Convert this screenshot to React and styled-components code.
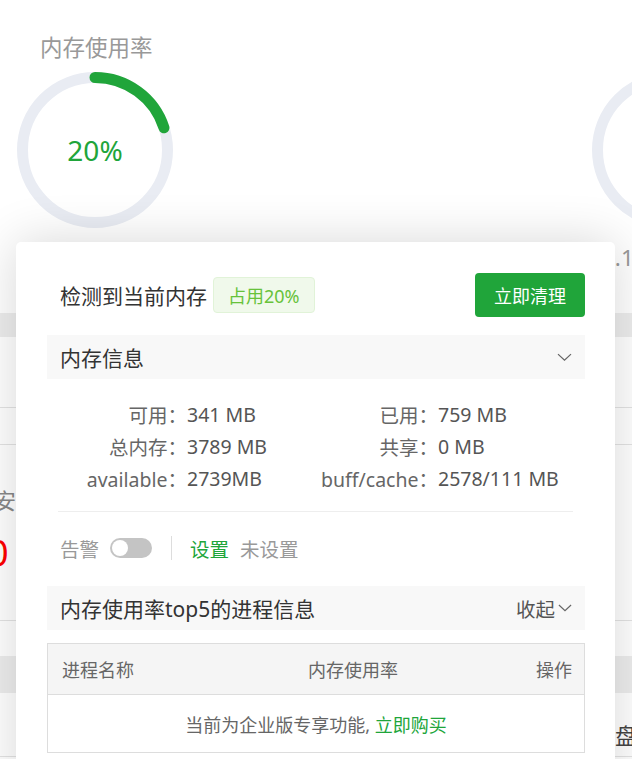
import React from 'react';
import styled, { createGlobalStyle } from 'styled-components';

const GlobalStyle = createGlobalStyle`
  html, body {
    margin: 0;
    padding: 0;
    background: #fff;
  }
  body {
    font-family: "Noto Sans", "Noto Sans CJK SC", sans-serif;
  }
`;

const GREEN = '#20a53a';

function Chevron({ size = 15 }) {
  return (
    <svg width={size} height={size * 0.55} viewBox="0 0 15 8" fill="none">
      <polyline points="1,1 7.5,7 14,1" stroke="#666" strokeWidth="1.3" />
    </svg>
  );
}

function Ring({ percent = 0, color = GREEN }) {
  const r = 72.5;
  const c = 2 * Math.PI * r;
  return (
    <svg width="156" height="156" viewBox="0 0 156 156">
      <circle cx="78" cy="78" r={r} fill="none" stroke="#e9ecf3" strokeWidth="11" />
      {percent > 0 && (
        <circle
          cx="78"
          cy="78"
          r={r}
          fill="none"
          stroke={color}
          strokeWidth="11"
          strokeLinecap="round"
          strokeDasharray={`${(c * percent) / 100} ${c}`}
          transform="rotate(-90 78 78)"
        />
      )}
    </svg>
  );
}

export default function App() {
  return (
    <>
      <GlobalStyle />
      <Page>
        <Gauges>
          <GaugeCol>
            <GaugeTitle>内存使用率</GaugeTitle>
            <GaugeBox>
              <Ring percent={20} />
              <GaugeValue>20%</GaugeValue>
            </GaugeBox>
          </GaugeCol>
          <GaugeCol $far>
            <GaugeTitle />
            <GaugeBox>
              <Ring percent={0} />
            </GaugeBox>
            <GaugeCaption>0.17</GaugeCaption>
          </GaugeCol>
        </Gauges>

        <List>
          <Band />
          <Row $h={71} />
          <Row $h={37} />
          <Row $h={176}>
            <SideText>安</SideText>
            <SideNumber>0</SideNumber>
          </Row>
          <Gap $h={35} />
          <Band $h={37} />
          <Row $h={64}>
            <FarText>磁盘</FarText>
          </Row>
        </List>

        <Card>
          <Header>
            <HeaderLeft>
              <HeaderTitle>检测到当前内存</HeaderTitle>
              <Badge>占用20%</Badge>
            </HeaderLeft>
            <PrimaryButton>立即清理</PrimaryButton>
          </Header>

          <SectionBar $top={18}>
            <SectionTitle>内存信息</SectionTitle>
            <Chevron />
          </SectionBar>

          <InfoGrid>
            <InfoLabel>可用：</InfoLabel>
            <InfoValue>341 MB</InfoValue>
            <InfoLabel>已用：</InfoLabel>
            <InfoValue>759 MB</InfoValue>
            <InfoLabel>总内存：</InfoLabel>
            <InfoValue>3789 MB</InfoValue>
            <InfoLabel>共享：</InfoLabel>
            <InfoValue>0 MB</InfoValue>
            <InfoLabel>available：</InfoLabel>
            <InfoValue>2739MB</InfoValue>
            <InfoLabel>buff/cache：</InfoLabel>
            <InfoValue>2578/111 MB</InfoValue>
          </InfoGrid>
          <Divider />

          <AlertRow>
            <Muted>告警</Muted>
            <Toggle>
              <Knob />
            </Toggle>
            <VSep />
            <LinkText>设置</LinkText>
            <Muted $gap={11}>未设置</Muted>
          </AlertRow>

          <SectionBar $top={26}>
            <SectionTitle>内存使用率top5的进程信息</SectionTitle>
            <Collapse>
              收起
              <Chevron size={14} />
            </Collapse>
          </SectionBar>

          <Table>
            <TableHead>
              <span>进程名称</span>
              <span>内存使用率</span>
              <span>操作</span>
            </TableHead>
            <TableBody>
              当前为企业版专享功能, <LinkText as="a">立即购买</LinkText>
            </TableBody>
          </Table>
        </Card>
      </Page>
    </>
  );
}

const Page = styled.div`
  position: relative;
  width: 632px;
  height: 759px;
  overflow: hidden;
  background: #fff;
`;

const Gauges = styled.div`
  display: flex;
  align-items: flex-start;
  height: 313px;
  padding: 33px 0 0 17px;
  box-sizing: border-box;
`;

const GaugeCol = styled.div`
  display: flex;
  flex-direction: column;
  flex-shrink: 0;
  margin-left: ${(p) => (p.$far ? '419px' : '0')};
`;

const GaugeTitle = styled.div`
  height: 30px;
  margin-left: 23px;
  font-size: 22.5px;
  line-height: 30px;
  color: #999;
  white-space: nowrap;
`;

const GaugeBox = styled.div`
  display: grid;
  place-items: center;
  width: 156px;
  height: 156px;
  margin-top: 9px;

  & > * {
    grid-area: 1 / 1;
  }
`;

const GaugeValue = styled.span`
  font-size: 28px;
  color: ${GREEN};
`;

const GaugeCaption = styled.div`
  margin: 15px 0 0 10px;
  font-size: 22.5px;
  line-height: 30px;
  color: #999;
`;

const List = styled.div`
  display: flex;
  flex-direction: column;
`;

const Band = styled.div`
  height: ${(p) => p.$h || 24}px;
  background: #ededed;
`;

const Row = styled.div`
  height: ${(p) => p.$h}px;
  border-bottom: 1px solid #e3e3e3;
  box-sizing: border-box;
  display: flex;
  flex-direction: column;
`;

const Gap = styled.div`
  height: ${(p) => p.$h}px;
`;

const SideText = styled.span`
  margin: 41px 0 0 -6px;
  font-size: 22px;
  line-height: 28px;
  color: #888;
`;

const SideNumber = styled.span`
  margin: 19px 0 0 -12px;
  font-size: 36px;
  line-height: 40px;
  color: #f00;
`;

const FarText = styled.span`
  margin: 28px 0 0 593px;
  font-size: 22px;
  line-height: 28px;
  color: #444;
  white-space: nowrap;
`;

const Card = styled.div`
  position: absolute;
  left: 16px;
  top: 242px;
  width: 599px;
  height: 560px;
  box-sizing: border-box;
  padding: 31px 30px 0 31px;
  background: #fff;
  border-radius: 5px;
  box-shadow: 0 0 50px rgba(0, 0, 0, 0.16);
`;

const Header = styled.div`
  display: flex;
  align-items: center;
  justify-content: space-between;
  height: 44px;
`;

const HeaderLeft = styled.div`
  display: flex;
  align-items: center;
  padding-left: 13px;
`;

const HeaderTitle = styled.span`
  font-size: 21px;
  color: #333;
`;

const Badge = styled.span`
  display: inline-flex;
  align-items: center;
  height: 36px;
  margin-left: 6px;
  padding: 0 14px;
  box-sizing: border-box;
  border: 1px solid #e1f3d8;
  border-radius: 4px;
  background: #f0f9eb;
  color: #67c23a;
  font-size: 18px;
`;

const PrimaryButton = styled.button`
  width: 110px;
  height: 44px;
  border: 0;
  border-radius: 4px;
  background: ${GREEN};
  color: #fff;
  font-family: inherit;
  font-size: 18px;
  cursor: pointer;
`;

const SectionBar = styled.div`
  display: flex;
  align-items: center;
  justify-content: space-between;
  height: 44px;
  margin-top: ${(p) => p.$top}px;
  padding: 0 13px;
  background: #f8f8f8;
`;

const SectionTitle = styled.span`
  font-size: 21px;
  color: #333;
`;

const Collapse = styled.span`
  display: flex;
  align-items: center;
  gap: 3px;
  font-size: 19.5px;
  color: #555;
`;

const InfoGrid = styled.div`
  display: grid;
  grid-template-columns: 140px 129px 122px 1fr;
  grid-auto-rows: 32px;
  align-items: center;
  padding: 19px 0 17px;
  font-size: 19.5px;
`;

const InfoLabel = styled.span`
  text-align: right;
  color: #666;
  white-space: nowrap;
`;

const InfoValue = styled.span`
  color: #555;
  white-space: nowrap;
`;

const Divider = styled.div`
  height: 1px;
  margin: 0 12px 0 11px;
  background: #eee;
`;

const AlertRow = styled.div`
  display: flex;
  align-items: center;
  height: 24px;
  margin-top: 24px;
  padding-left: 13px;
  font-size: 19.5px;
`;

const Muted = styled.span`
  color: #999;
  margin-left: ${(p) => p.$gap || 0}px;
`;

const Toggle = styled.span`
  display: inline-flex;
  align-items: center;
  width: 42px;
  height: 20px;
  margin-left: 11px;
  padding: 0 2px;
  box-sizing: border-box;
  border-radius: 10px;
  background: #c4c4c4;
`;

const Knob = styled.span`
  width: 16px;
  height: 16px;
  border-radius: 50%;
  background: #fff;
`;

const VSep = styled.span`
  width: 1px;
  height: 24px;
  margin: 0 18px 0 19px;
  background: #ddd;
`;

const LinkText = styled.span`
  color: ${GREEN};
  text-decoration: none;
`;

const Table = styled.div`
  margin-top: 13px;
  border: 1px solid #ddd;
`;

const TableHead = styled.div`
  display: grid;
  grid-template-columns: 246px 1fr auto;
  align-items: center;
  height: 50px;
  padding: 0 12px 0 14px;
  background: #f5f5f5;
  border-bottom: 1px solid #ddd;
  font-size: 18px;
  color: #666;
`;

const TableBody = styled.div`
  display: flex;
  align-items: center;
  justify-content: center;
  height: 57px;
  font-size: 18px;
  color: #666;
  white-space: pre;
`;
